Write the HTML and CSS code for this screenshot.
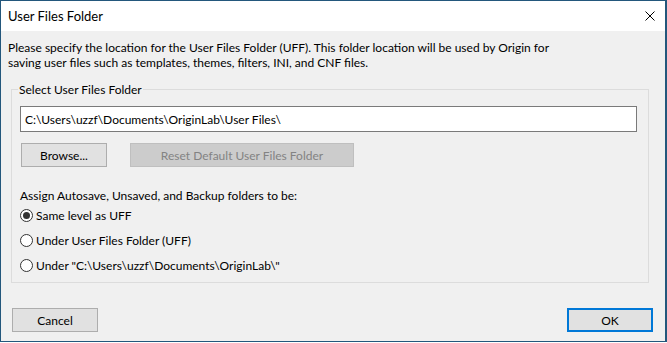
FILE: index.html
```html
<!doctype html>
<html>
<head>
<title>User Files Folder</title>
<link rel="stylesheet" href="styles.css">
</head>
<body>
<div class="window">
    <header class="titlebar">
        <span class="title">User Files Folder</span>
        <svg class="close" width="10" height="10" viewBox="0 0 10 10"><path d="M0.5 0.5 L9.5 9.5 M9.5 0.5 L0.5 9.5" stroke="#000" stroke-width="1" fill="none"/></svg>
    </header>
    <div class="content">
        <p class="intro">Please specify the location for the User Files Folder (UFF). This folder location will be used by Origin for<br>saving user files such as templates, themes, filters, INI, and CNF files.</p>

        <fieldset class="group">
            <legend>Select User Files Folder</legend>
            <input class="path" type="text" value="C:\Users\uzzf\Documents\OriginLab\User Files\">
            <div class="row">
                <button class="btn browse">Browse...</button>
                <button class="btn reset" disabled>Reset Default User Files Folder</button>
            </div>
            <div class="assign">Assign Autosave, Unsaved, and Backup folders to be:</div>
            <label class="radio"><span class="dot checked"></span>Same level as UFF</label>
            <label class="radio"><span class="dot"></span>Under User Files Folder (UFF)</label>
            <label class="radio"><span class="dot"></span>Under "C:\Users\uzzf\Documents\OriginLab\"</label>
        </fieldset>

        <div class="buttons">
            <button class="btn">Cancel</button>
            <button class="btn ok">OK</button>
        </div>
    </div>
</div>
</body>
</html>
```

FILE: styles.css
```css
html, body
{
    margin:0;
    padding:0;
    background:#fff;
}
body
{
    font-family:Lato, "Liberation Sans", sans-serif;
    font-size:12px;
    color:#000;
}
.window
{
    box-sizing:border-box;
    width:667px;
    height:342px;
    border:1px solid #23577c;
    border-right-width:2px;
    display:flex;
    flex-direction:column;
}
.titlebar
{
    height:30px;
    background:#fff;
    display:flex;
    align-items:center;
    justify-content:space-between;
    padding:0 10px 0 7px;
}
.title
{
    font-size:13px;
}
.close
{
    display:block;
}
.content
{
    flex:1;
    background:#f0f0f0;
    display:flex;
    flex-direction:column;
}
.intro
{
    margin:0;
    padding:9px 0 0 7px;
    line-height:15px;
}
.group
{
    margin:12px 16px 0 10px;
    padding:9px 11px 4px 8px;
    border:1px solid #dcdcdc;
    min-width:0;
}
.group legend
{
    padding:0 1px;
    margin-left:-2px;
    line-height:15px;
}
.path
{
    display:block;
    box-sizing:border-box;
    width:100%;
    height:26px;
    margin:0;
    padding:0 4px;
    border:1px solid #7a7a7a;
    background:#fff;
    font:inherit;
    color:#000;
    outline:none;
}
.row
{
    display:flex;
    gap:23px;
    margin:11px 0 0 1px;
}
.btn
{
    box-sizing:border-box;
    height:24px;
    width:86px;
    margin:0;
    padding:0;
    border:1px solid #adadad;
    background:#e1e1e1;
    font:inherit;
    color:#000;
}
.reset
{
    width:224px;
    background:#cccccc;
    border-color:#bfbfbf;
    color:#838383;
}
.assign
{
    margin-top:21px;
    line-height:15px;
}
.radio
{
    display:flex;
    align-items:center;
    gap:3px;
    height:25px;
}
.dot
{
    box-sizing:border-box;
    width:13px;
    height:13px;
    border:1px solid #333;
    border-radius:50%;
    background:#fff;
    display:flex;
    align-items:center;
    justify-content:center;
}
.dot.checked::after
{
    content:"";
    width:7px;
    height:7px;
    border-radius:50%;
    background:#333;
}
.buttons
{
    display:flex;
    justify-content:space-between;
    margin:25px 12px 0 11px;
}
.ok
{
    border:2px solid #0078d7;
}
```
